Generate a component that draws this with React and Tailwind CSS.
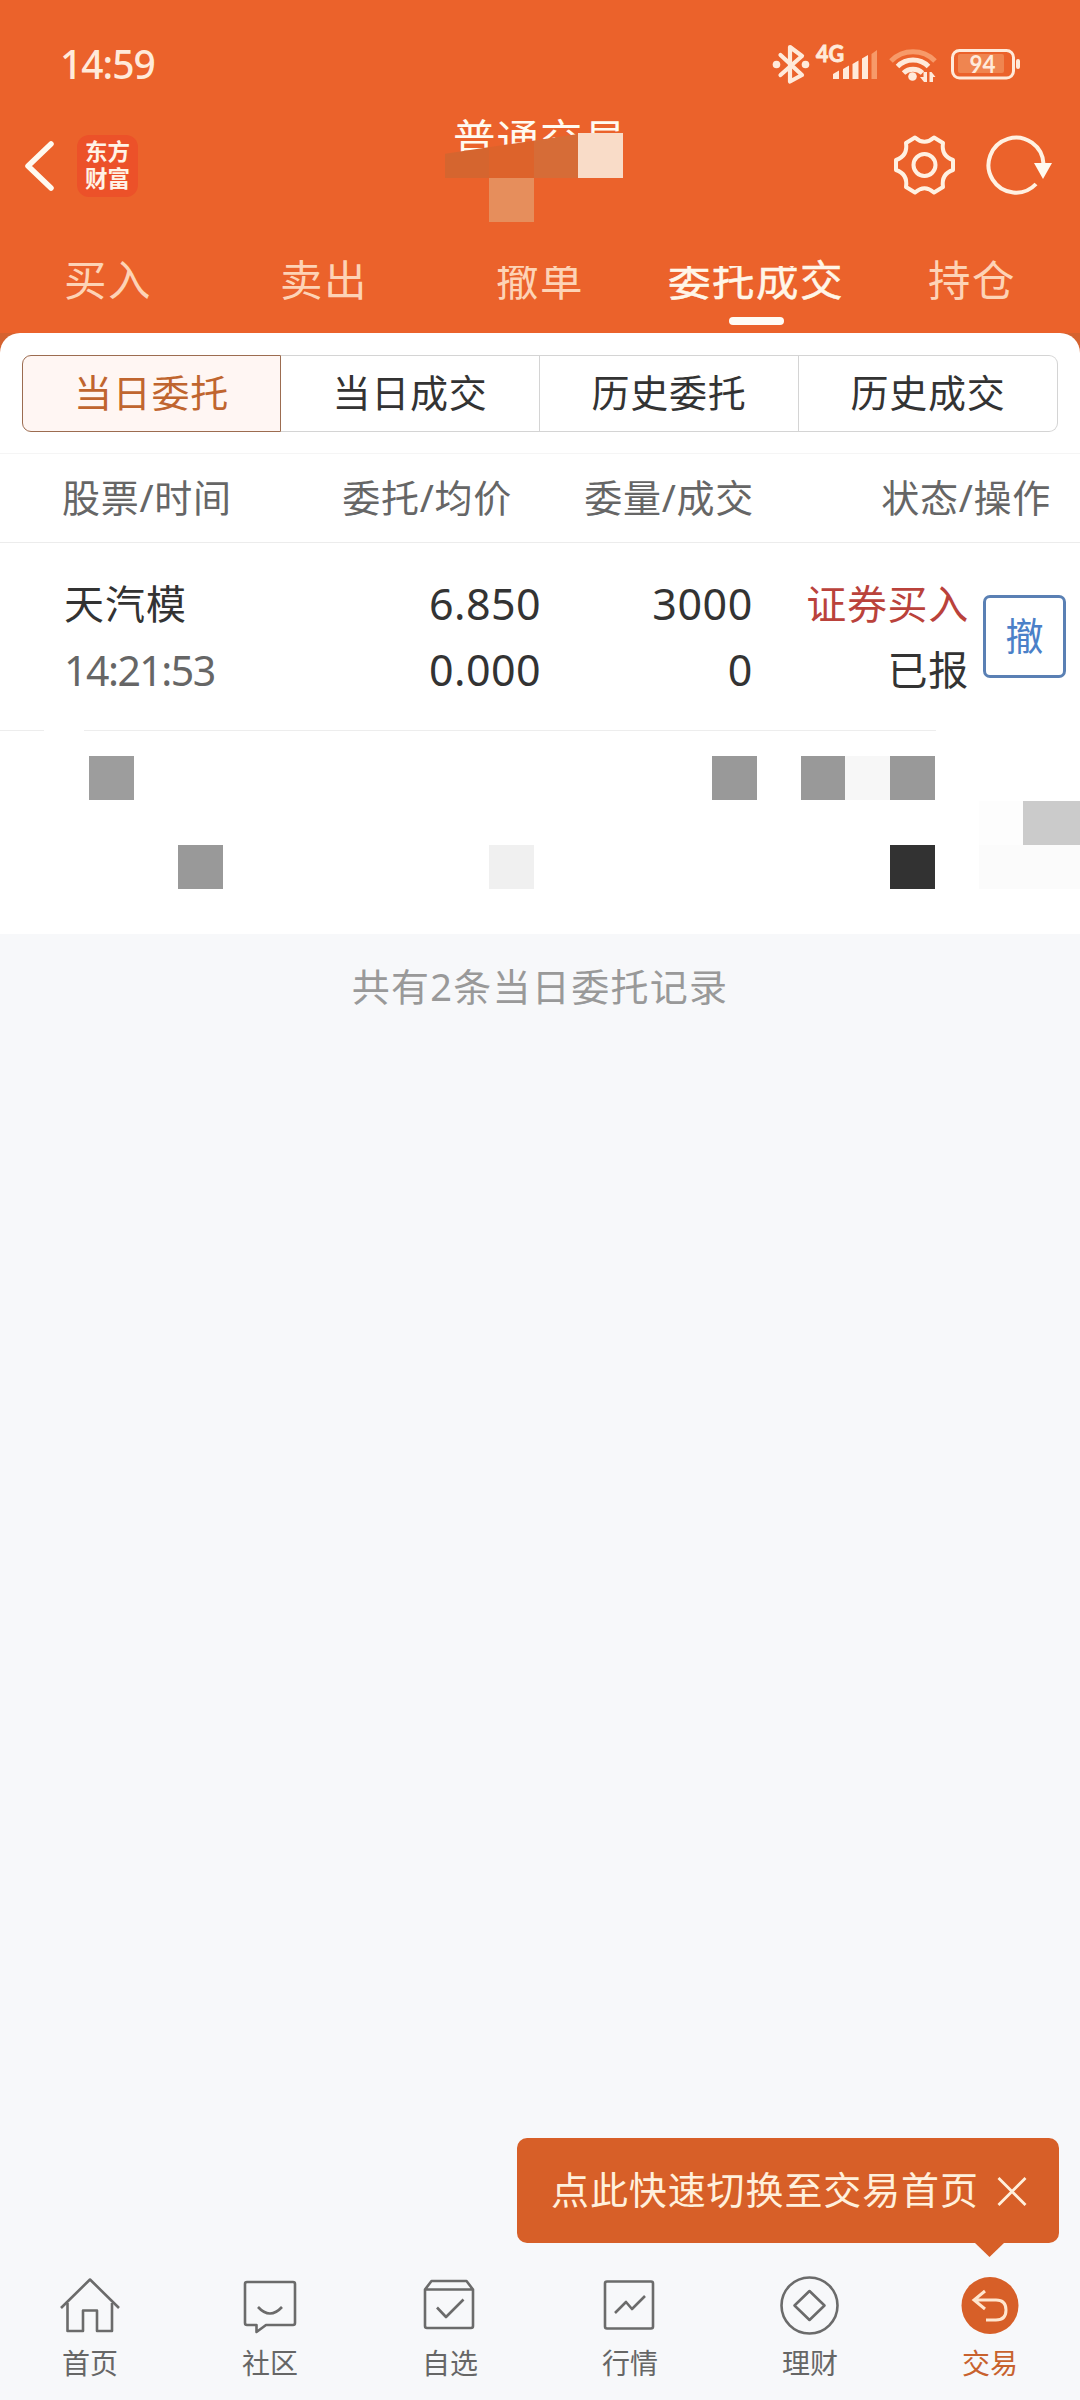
const FONT = "font-['Noto_Sans','Noto_Sans_CJK_SC',sans-serif]";

function StatusIcons() {
  return (
    <svg className="block h-[60px] w-[270px]" viewBox="760 36 270 60" fill="none">
      <g stroke="#ffeada" strokeWidth="4.200" strokeLinejoin="round" strokeLinecap="round">
        <path d="M780.500 55 L802 75 L790 81.500 V47 L802 56 L780.500 75" />
      </g>
      <g fill="#ffeada">
        <circle cx="776.500" cy="64.500" r="3.800" />
        <circle cx="805.500" cy="64.500" r="3.800" />
        <text x="816" y="62" fontSize="22" fontWeight="700" fontFamily="Lato, sans-serif" textLength="28" lengthAdjust="spacingAndGlyphs" stroke="#ffeada" strokeWidth="0.900">4G</text>
        <path d="M833 79 v-5 l6-3.500 v8.500z M843 79 v-10 l6-3.500 v13.500z M852.500 79 v-15 l6-3.500 v18.500z M862 79 v-20.500 l6-3.500 v24z" />
        <path d="M871.500 79 v-25 l5.500-4 v29z" fill="#f79a69" />
        <circle cx="912.500" cy="76.500" r="4.300" />
        <path d="M927 72 v10 h-3 l-4-5 h3.500 v-5z M929.500 82 v-10 h2 l4 5 h-2.500 v5z" />
      </g>
      <g strokeWidth="5" fill="none">
        <path d="M891 61 A31 31 0 0 1 935 61" stroke="#f79a69" />
        <path d="M897.500 66.500 A22 22 0 0 1 928.500 66.500" stroke="#ffeada" />
        <path d="M903.500 73 A14 14 0 0 1 922.500 73" stroke="#ffeada" />
      </g>
      <rect x="952.500" y="50.500" width="61" height="27.500" rx="7" stroke="#ffeada" strokeWidth="3" />
      <rect x="958" y="54" width="46" height="19" rx="2" fill="#ef8550" />
      <rect x="1016" y="59" width="4" height="10" rx="2" fill="#ffeada" />
      <text x="969.500" y="73" fill="#ffeada" fontSize="24" fontWeight="700" fontFamily="Lato, sans-serif" textLength="26" lengthAdjust="spacingAndGlyphs">94</text>
    </svg>
  );
}

function HeaderIcons() {
  return (
    <svg className="block h-[90px] w-[190px]" viewBox="880 125 190 90" fill="none" stroke="#fff1e2" strokeWidth="4" strokeLinejoin="round">
      <path d="M915 137.500 Q924.500 146 934 137.500 L943 143 Q941 156 953 160 V170 Q941 174 943 187 L934 192.500 Q924.500 184 915 192.500 L906 187 Q908 174 896 170 V160 Q908 156 906 143 Z" />
      <circle cx="924.500" cy="165" r="11" />
      <path d="M1036 184 A27.500 27.500 0 1 1 1043.500 164" />
      <path d="M1034 163 H1052 L1043 179 Z" fill="#fffaf0" stroke="none" />
    </svg>
  );
}

function TabLabel({ children, className = "" }) {
  return <span className={"inline-block text-[42.500px] leading-[60px] tracking-[1.500px] " + className}>{children}</span>;
}

const NAV = [
  ["首页", (
    <g>
      <path d="M3 38 L32 9.500 L61 38" />
      <path d="M9.500 33 V61 H25 V40.500 H39 V61 H54 V33" />
    </g>
  )],
  ["社区", (
    <g>
      <path d="M9 12 H55 Q57 12 57 14 V53 Q57 55 55 55 H28 L18.500 62 V55 H9 Q7 55 7 53 V14 Q7 12 9 12Z" />
      <path d="M20 37 Q32 50 44 37" />
    </g>
  )],
  ["自选", (
    <g>
      <path d="M7 19.500 L13.500 11 H48.500 L55 19.500 V56 Q55 58 53 58 H9 Q7 58 7 56 Z M7 19.500 H55" />
      <path d="M19 37.500 L28 47 L45.500 29.500" />
    </g>
  )],
  ["行情", (
    <g>
      <rect x="7" y="11.500" width="48" height="47" rx="2" />
      <path d="M17 43 L28 32 L34 39 L47 26" />
    </g>
  )],
  ["理财", (
    <g>
      <circle cx="31.500" cy="35.500" r="28" />
      <path d="M31.500 21 L46.500 35.500 L31.500 50 L16.500 35.500Z" />
    </g>
  )],
];

function Mosaic({ className }) {
  return <div className={"absolute " + className} />;
}

export default function App() {
  return (
    <div className={"relative flex h-[2400px] w-[1080px] flex-col overflow-hidden bg-[#f7f8fa] text-[#333] " + FONT}>
      <header className="flex h-[333px] shrink-0 flex-col bg-[#eb622b]">
        <div className="flex h-[96px] items-start justify-between pl-[60px] pr-[50px]">
          <span className="mt-[36px] text-[39px] font-medium leading-[56px] tracking-[-1px] text-[#ffeada]">14:59</span>
          <div className="mt-[36px]"><StatusIcons /></div>
        </div>
        <div className="relative flex h-[144px] justify-between pr-[10px]">
          <div className="flex">
            <svg className="mt-[40px] ml-[20px] block h-[60px] w-[40px]" viewBox="20 136 40 60" fill="none" stroke="#fffaf0" strokeWidth="5.500" strokeLinecap="round" strokeLinejoin="round">
              <path d="M51 144 L28 166 L51 188" />
            </svg>
            <div className="mt-[39px] ml-[17px] flex h-[62px] w-[61px] flex-col items-center justify-center rounded-[12px] bg-[#ec5129] pb-[2px] text-[22.500px] font-bold leading-[27px] text-[#fff3e6]">
              <span>东方</span>
              <span>财富</span>
            </div>
          </div>
          <h1 className="absolute left-[453px] top-[13px] whitespace-nowrap text-[42.500px] leading-[60px] tracking-[1px] text-[#fffaf0] [clip-path:polygon(0_0,100%_0,100%_35%,0_74%)]">普通交易</h1>
          <Mosaic className="left-[445px] top-[38px] h-[44px] w-[133px] bg-[linear-gradient(90deg,#d5652f_0_44px,#dd632b_44px_89px,#d66c37_89px)] [clip-path:polygon(0_45%,100%_0,100%_100%,0_100%)]" />
          <Mosaic className="left-[578px] top-[37px] h-[45px] w-[45px] bg-[#f9dcc8]" />
          <Mosaic className="left-[489px] top-[82px] h-[44px] w-[45px] bg-[#e68e5c]" />
          <div className="mt-[29px]"><HeaderIcons /></div>
        </div>
        <nav className="grid h-[93px] grid-cols-5 pt-[10px] text-center text-[#fdd3b6]">
          <TabLabel>买入</TabLabel>
          <TabLabel>卖出</TabLabel>
          <TabLabel className="[clip-path:inset(16px_0_0_0)]">撤单</TabLabel>
          <div className="flex flex-col items-center text-[#fff6e8]">
            <div className="flex [-webkit-text-stroke:0.500px_#fff6e8]">
              <TabLabel className="[clip-path:inset(16px_0_0_0)]">委托成</TabLabel>
              <TabLabel>交</TabLabel>
            </div>
            <div className="mt-[7px] h-[8px] w-[55px] shrink-0 rounded-full bg-[#fffcf5]" />
          </div>
          <TabLabel>持仓</TabLabel>
        </nav>
      </header>

      <main className="flex flex-1 flex-col">
        <div className="bg-[linear-gradient(#d5622f_0_20px,#fff_20px)]">
          <section className="flex h-[120px] flex-col rounded-t-[20px] bg-white px-[22px] pt-[22px]">
            <div className="grid h-[77px] grid-cols-4 text-center text-[38px] leading-[73px] tracking-[0.700px]">
              <div className="rounded-l-[9px] border border-[#9c6c50] bg-[#fff6f3] text-[#c0652f]">当日委托</div>
              <div className="border-y border-r border-[#d4d4d4]">当日成交</div>
              <div className="border-y border-r border-[#d4d4d4]">历史委托</div>
              <div className="rounded-r-[9px] border-y border-r border-[#d4d4d4]">历史成交</div>
            </div>
          </section>
        </div>

        <div className="flex h-[90px] border-y border-[#ececec] border-t-[#f5f5f5] bg-white pt-[13px] text-[38px] leading-[60px] tracking-[0.700px] text-[#666]">
          <span className="w-[332px] pl-[62px]">股票/时间</span>
          <span className="w-[180px] shrink-0 whitespace-nowrap text-right">委托/均价</span>
          <span className="w-[242px] text-right">委量/成交</span>
          <span className="w-[297px] text-right">状态/操作</span>
        </div>

        <div className="flex h-[188px] bg-white pt-[28px] text-[41px] leading-[66px]">
          <div className="flex w-[300px] flex-col pl-[64px]">
            <span className="text-[40px] tracking-[1px]">天汽模</span>
            <span className="tracking-[-1.500px] text-[#666]">14:21:53</span>
          </div>
          <div className="flex w-[241px] flex-col text-right text-[43px] tracking-[0.400px]">
            <span>6.850</span>
            <span>0.000</span>
          </div>
          <div className="flex w-[212px] flex-col text-right text-[43px] tracking-[0.600px]">
            <span>3000</span>
            <span>0</span>
          </div>
          <div className="flex w-[216px] flex-col text-right text-[40px] tracking-[0.700px]">
            <span className="text-[#ba423b]">证券买入</span>
            <span>已报</span>
          </div>
          <button className="mt-[24px] ml-[14px] flex h-[83px] w-[83px] items-center justify-center rounded-[7px] border-[3px] border-[#5a80b4] pb-[3px] text-[38px] text-[#4b80c8]">撤</button>
        </div>

        <div className="relative h-[203px] shrink-0 bg-white">
          <Mosaic className="left-0 -top-px h-px w-[44px] bg-[#ededed]" />
          <Mosaic className="left-[84px] -top-px h-px w-[852px] bg-[#ededed]" />
          <Mosaic className="left-[89px] top-[25px] h-[44px] w-[45px] bg-[#9d9d9d]" />
          <Mosaic className="left-[711.500px] top-[25px] h-[44px] w-[45px] bg-[#999]" />
          <Mosaic className="left-[800.500px] top-[25px] h-[44px] w-[45px] bg-[#999]" />
          <Mosaic className="left-[845px] top-[25px] h-[44px] w-[45px] bg-[#f7f7f7]" />
          <Mosaic className="left-[889.500px] top-[25px] h-[44px] w-[45px] bg-[#999]" />
          <Mosaic className="left-[178px] top-[114px] h-[44px] w-[45px] bg-[#999]" />
          <Mosaic className="left-[489px] top-[114px] h-[44px] w-[45px] bg-[#f0f0f0]" />
          <Mosaic className="left-[889.500px] top-[114px] h-[44px] w-[45px] bg-[#323232]" />
          <Mosaic className="left-[979px] top-[114px] h-[44px] w-[101px] bg-[#fbfbfb]" />
          <Mosaic className="left-[979px] top-[70px] h-[44px] w-[44px] bg-[#fdfdfd]" />
          <Mosaic className="left-[1023px] top-[70px] h-[44px] w-[57px] bg-[#cbcbcb]" />
        </div>

        <p className="pt-[22px] text-center text-[38px] leading-[60px] tracking-[1.300px] text-[#999]">共有2条当日委托记录</p>
      </main>

      <footer className="relative grid h-[140px] shrink-0 grid-cols-6 pt-[10px] text-center text-[28px] leading-[40px] text-[#666]">
        {NAV.map(([label, icon]) => (
          <div key={label} className="flex flex-col items-center">
            <svg className="h-[68px] w-[64px]" viewBox="0 0 64 68" fill="none" stroke="#6b6b6b" strokeWidth="2.600" strokeLinejoin="round">{icon}</svg>
            <span className="mt-[5px]">{label}</span>
          </div>
        ))}
        <div className="flex flex-col items-center text-[#c8622e]">
          <svg className="h-[68px] w-[64px]" viewBox="0 0 64 68" fill="none">
            <circle cx="32" cy="35.500" r="28.500" fill="#d75f28" />
            <path d="M27 21 L16 30 L27 39 M16 30 H38 Q48 30 48 40 T38 50 H28" stroke="#ffe6cf" strokeWidth="3" />
          </svg>
          <span className="mt-[5px]">交易</span>
        </div>
        <div className="absolute -top-[122px] left-[517px] flex h-[105px] w-[542px] items-center rounded-[10px] bg-[#d75f28] pl-[34px] text-[38px] tracking-[0.900px] text-[#fff0dc]">
          <span className="-mt-[4px] w-[445px] shrink-0 whitespace-nowrap text-left">点此快速切换至交易首页</span>
          <svg className="h-[32px] w-[32px]" viewBox="0 0 32 32" fill="none" stroke="#fff0dc" strokeWidth="2.800">
            <path d="M2.500 3 L29.500 30 M29.500 3 L2.500 30" />
          </svg>
          <div className="absolute left-[458px] top-full h-[14px] w-[29px] bg-[#d75f28] [clip-path:polygon(0_0,100%_0,50%_100%)]" />
        </div>
      </footer>
    </div>
  );
}
